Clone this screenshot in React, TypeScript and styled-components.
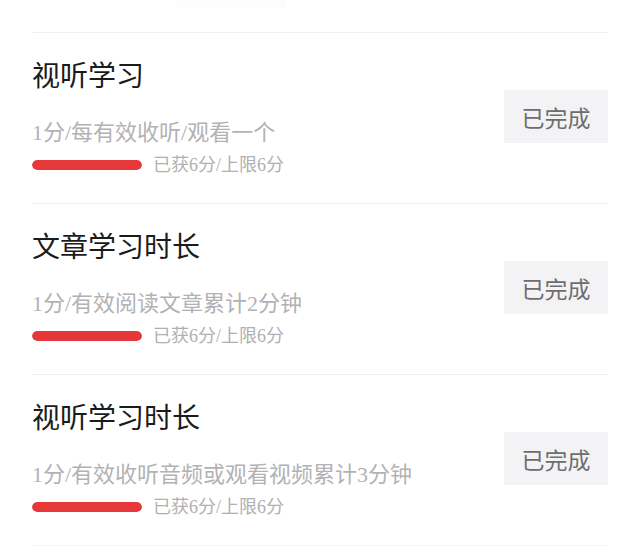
import React, { FC } from 'react';
import styled, { createGlobalStyle } from 'styled-components';

interface Task {
  title: string;
  rule: string;
  earned: number;
  limit: number;
  done: boolean;
}

const tasks: Task[] = [
  { title: '视听学习', rule: '1分/每有效收听/观看一个', earned: 6, limit: 6, done: true },
  { title: '文章学习时长', rule: '1分/有效阅读文章累计2分钟', earned: 6, limit: 6, done: true },
  { title: '视听学习时长', rule: '1分/有效收听音频或观看视频累计3分钟', earned: 6, limit: 6, done: true },
];

const GlobalStyle = createGlobalStyle`
  html, body {
    margin: 0;
    padding: 0;
    background: #ffffff;
  }
  body {
    font-family: "Noto Sans CJK SC", "Noto Sans", sans-serif;
  }
`;

const TaskRow: FC<{ task: Task }> = ({ task }) => {
  const ratio = task.limit > 0 ? Math.min(task.earned / task.limit, 1) : 0;
  return (
    <Row>
      <Info>
        <Title>{task.title}</Title>
        <Rule>{task.rule}</Rule>
        <Progress>
          <Track>
            <Fill style={{ width: `${ratio * 100}%` }} />
          </Track>
          <Meta>{`已获${task.earned}分/上限${task.limit}分`}</Meta>
        </Progress>
      </Info>
      <StatusButton done={task.done}>{task.done ? '已完成' : '去看看'}</StatusButton>
    </Row>
  );
};

const App: FC = () => {
  return (
    <>
      <GlobalStyle />
      <Page>
        <TopStub />
        <List>
          {tasks.map((task) => (
            <TaskRow key={task.title} task={task} />
          ))}
        </List>
      </Page>
    </>
  );
};

const Page = styled.div`
  width: 640px;
  height: 558px;
  overflow: hidden;
  background: #ffffff;
  position: relative;
`;
const TopStub = styled.div`
  position: absolute;
  top: 0;
  left: 176px;
  width: 110px;
  height: 8px;
  background: #fcfcfd;
`;
const List = styled.div`
  padding: 32px 32px 0 32px;
  display: flex;
  flex-direction: column;
`;
const Row = styled.div`
  display: flex;
  align-items: center;
  justify-content: space-between;
  border-top: 1px solid #f1f1f2;
  height: 170px;
  box-sizing: content-box;
  &:last-child {
    border-bottom: 1px solid #f4f4f6;
  }
`;
const Info = styled.div`
  display: flex;
  flex-direction: column;
  padding-top: 2px;
`;
const Title = styled.div`
  font-family: "Liberation Serif", "Noto Sans CJK SC", serif;
  font-size: 28px;
  line-height: 28px;
  color: #1b1b1b;
`;
const Rule = styled.div`
  margin-top: 31px;
  font-family: "Liberation Serif", "Noto Sans CJK SC", serif;
  font-size: 22px;
  line-height: 22px;
  color: #b2b2b4;
`;
const Progress = styled.div`
  display: flex;
  align-items: center;
  margin-top: 11px;
  height: 20px;
`;
const Track = styled.div`
  width: 110px;
  height: 10px;
  border-radius: 5px;
  background: #f3f3f3;
  overflow: hidden;
`;
const Fill = styled.div`
  height: 100%;
  border-radius: 5px;
  background: #e6373b;
`;
const Meta = styled.span`
  margin-left: 11px;
  font-family: "Liberation Serif", "Noto Sans CJK SC", serif;
  font-size: 18px;
  line-height: 20px;
  color: #b0b0b2;
`;
const StatusButton = styled.div<{ done: boolean }>`
  width: 104px;
  height: 53px;
  display: flex;
  align-items: center;
  justify-content: center;
  background: ${({ done }): string => (done ? '#f3f3f5' : '#e6373b')};
  color: ${({ done }): string => (done ? '#6e6e70' : '#ffffff')};
  font-family: "Noto Sans CJK SC", sans-serif;
  font-size: 23px;
  margin-top: -3px;
`;

export default App;
